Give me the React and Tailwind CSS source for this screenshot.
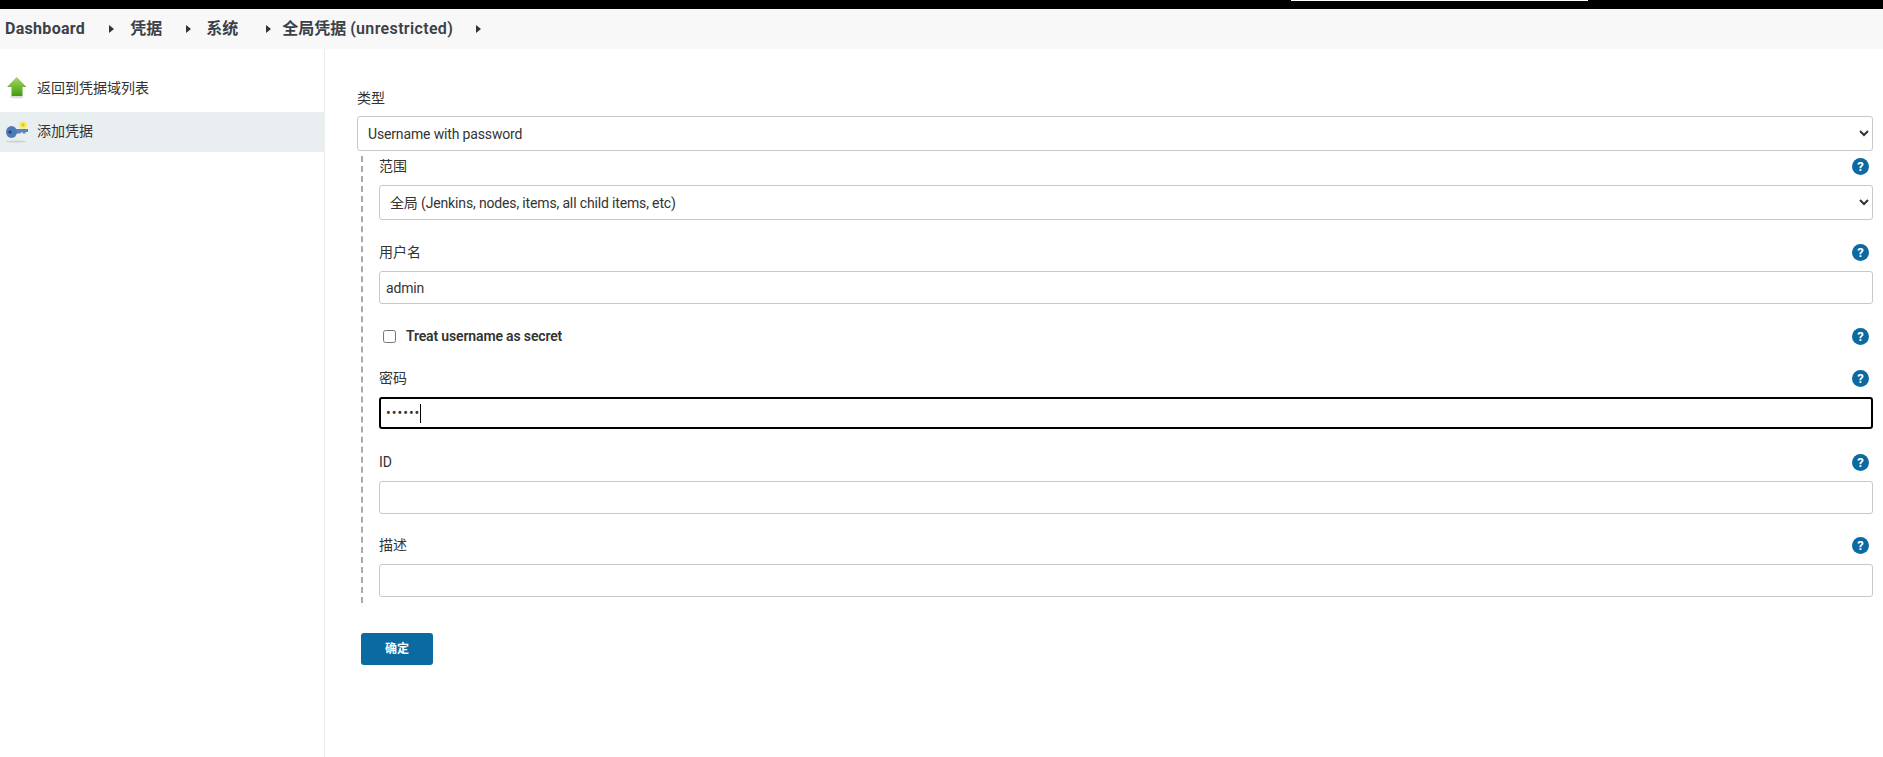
const FONT = "font-['Roboto','Noto_Sans_CJK_SC',sans-serif]";

const HelpIcon = () => (
  <span className="flex h-[17px] w-[17px] items-center justify-center rounded-full bg-[#0b6aa2] text-[13px] font-bold leading-none text-white">
    ?
  </span>
);

const LabelRow = ({ label }) => (
  <div className="flex h-5 -translate-y-px items-center justify-between pr-1">
    <span className="text-[14px] text-[#333]">{label}</span>
    <HelpIcon />
  </div>
);

const ArrowIcon = () => (
  <svg width="22" height="24" viewBox="0 0 22 24" className="shrink-0">
    <defs>
      <linearGradient id="up" x1="0" y1="0" x2="0" y2="1">
        <stop offset="0" stopColor="#a5d66a" />
        <stop offset="0.6" stopColor="#6cb52d" />
        <stop offset="1" stopColor="#3f9a0c" />
      </linearGradient>
    </defs>
    <ellipse cx="10.7" cy="21" rx="7" ry="1.5" fill="#dcdcdc" />
    <path d="M10.7 1 L20.5 11 H16.5 V20 H5.5 V11 H1 Z" fill="url(#up)" />
  </svg>
);

const KeyIcon = () => (
  <svg width="25" height="26" viewBox="0 0 25 26" className="shrink-0">
    <ellipse cx="10" cy="22.5" rx="10" ry="1" fill="#cfd2d4" />
    <circle cx="17" cy="6" r="4" fill="#f3f06a" />
    <circle cx="17" cy="6" r="1.8" fill="#e3c92c" />
    <path d="M10 10 H22 V13 H19.5 V14.5 H17 V13.5 H14.5 V14.5 H10 Z" fill="#5b84bd" />
    <ellipse cx="5.5" cy="13" rx="5.5" ry="6" fill="#4f7bb5" />
    <circle cx="4" cy="13" r="1.6" fill="#22426e" />
  </svg>
);

const inputClass =
  "block w-full rounded-[3px] border border-[#c8c8c8] bg-white px-[6px] text-[14px] tracking-[-0.15px] text-[#333] outline-none";

const Caret = ({ className }) => (
  <svg width="5" height="8" viewBox="0 0 5 8" className={className}>
    <path d="M0 0 L5 4 L0 8 Z" fill="#333" />
  </svg>
);

export default function App() {
  return (
    <div className={`flex h-screen flex-col overflow-hidden bg-white ${FONT}`}>
      <div className="h-[9px] shrink-0 bg-black">
        <div className="ml-[1291px] h-px w-[297px] bg-white" />
      </div>

      <nav className="flex h-10 shrink-0 items-center bg-[#f8f8f8] pl-[5px] text-[16px] font-semibold text-[#3b4149]">
        <span className="font-bold tracking-[0.3px]">Dashboard</span>
        <Caret className="ml-6 mr-4" />
        <span>凭据</span>
        <Caret className="ml-6 mr-[15px]" />
        <span>系统</span>
        <Caret className="ml-7 mr-[11px]" />
        <span>
          全局凭据 <span className="tracking-[0.35px]">(unrestricted)</span>
        </span>
        <Caret className="ml-[23px]" />
      </nav>

      <div className="flex min-h-0 flex-1">
        <aside className="w-[325px] shrink-0 border-r border-[#ececec] pt-[21px]">
          <div className="flex h-[42px] items-center gap-[9px] pb-[6px] pl-[6px] text-[14px] text-[#333]">
            <ArrowIcon />
            <span>返回到凭据域列表</span>
          </div>
          <div className="flex h-10 items-center gap-[6px] bg-[#e9eef1] pl-[6px] text-[14px] text-[#333]">
            <KeyIcon />
            <span className="pb-[2px]">添加凭据</span>
          </div>
        </aside>

        <main className="min-w-0 flex-1 pl-8 pr-[10px] pt-[39px]">
          <div className="mb-2 h-5 text-[14px] text-[#333]">类型</div>
          <select className={`${inputClass} h-[35px] pl-[6px]`} defaultValue="up">
            <option value="up">Username with password</option>
          </select>

          <div className="ml-1 mt-[5px] border-l-2 border-dashed border-[#aaa] pb-[6px] pl-4 pt-px">
            <LabelRow label="范围" />
            <select className={`${inputClass} mt-2 h-[35px]`} defaultValue="global">
              <option value="global">全局 (Jenkins, nodes, items, all child items, etc)</option>
            </select>

            <div className="mt-[23px]">
              <LabelRow label="用户名" />
              <input className={`${inputClass} mt-2 h-[33px]`} defaultValue="admin" />
            </div>

            <div className="mt-[22px] flex h-5 items-center justify-between pr-1">
              <label className="flex items-center gap-[10px] pl-[4px] text-[14px] font-semibold tracking-[-0.15px] text-[#333]">
                <input type="checkbox" className="m-0 h-[13px] w-[13px]" />
                Treat username as secret
              </label>
              <HelpIcon />
            </div>

            <div className="mt-[23px]">
              <LabelRow label="密码" />
              <div className="relative mt-2">
                <input
                  type="password"
                  className="block h-8 w-full rounded-[3px] border-2 border-black bg-white px-[5px] text-[14px] tracking-[1px] text-[#333] outline-none"
                  defaultValue="123456"
                />
                <span className="absolute left-[41px] top-[7px] h-[19px] w-px bg-black" />
              </div>
            </div>

            <div className="mt-6">
              <LabelRow label="ID" />
              <input className={`${inputClass} mt-2 h-[33px]`} />
            </div>

            <div className="mt-[22px]">
              <LabelRow label="描述" />
              <input className={`${inputClass} mt-2 h-[33px]`} />
            </div>
          </div>

          <button className="ml-1 mt-[30px] h-8 w-[72px] rounded-[3px] bg-[#0b6aa2] text-[12px] font-bold text-white">
            确定
          </button>
        </main>
      </div>
    </div>
  );
}
